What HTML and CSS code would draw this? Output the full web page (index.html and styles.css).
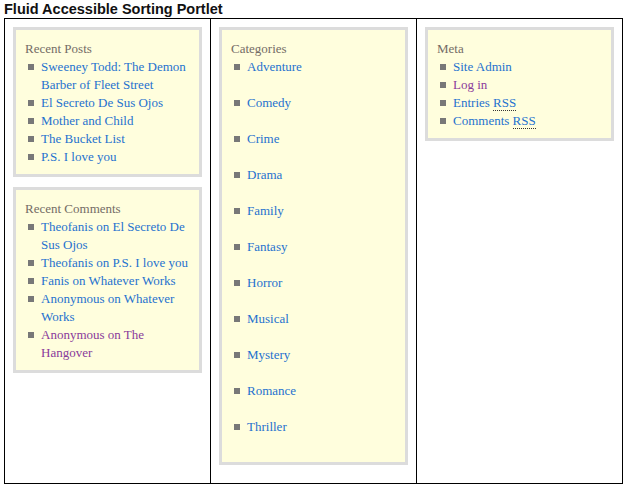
FILE: index.html
```html
<!DOCTYPE html>
<html>
<head>
<meta charset="utf-8">
<link rel="stylesheet" href="styles.css">
</head>
<body>
<h1 class="title">Fluid Accessible Sorting Portlet</h1>
<div class="layout">
  <div class="column">
    <div class="portlet">
      <h2 class="portlet-title">Recent Posts</h2>
      <ul class="list">
        <li><span><a href="#">Sweeney Todd: The Demon Barber of Fleet Street</a></span></li>
        <li><span><a href="#">El Secreto De Sus Ojos</a></span></li>
        <li><span><a href="#">Mother and Child</a></span></li>
        <li><span><a href="#">The Bucket List</a></span></li>
        <li><span><a href="#">P.S. I love you</a></span></li>
      </ul>
    </div>
    <div class="portlet">
      <h2 class="portlet-title">Recent Comments</h2>
      <ul class="list">
        <li><span><a href="#">Theofanis on El Secreto De Sus Ojos</a></span></li>
        <li><span><a href="#">Theofanis on P.S. I love you</a></span></li>
        <li><span><a href="#">Fanis on Whatever Works</a></span></li>
        <li><span><a href="#">Anonymous on Whatever Works</a></span></li>
        <li><span><a href="#" class="visited">Anonymous on The Hangover</a></span></li>
      </ul>
    </div>
  </div>
  <div class="column">
    <div class="portlet">
      <h2 class="portlet-title">Categories</h2>
      <ul class="list spaced">
        <li><span><a href="#">Adventure</a></span></li>
        <li><span><a href="#">Comedy</a></span></li>
        <li><span><a href="#">Crime</a></span></li>
        <li><span><a href="#">Drama</a></span></li>
        <li><span><a href="#">Family</a></span></li>
        <li><span><a href="#">Fantasy</a></span></li>
        <li><span><a href="#">Horror</a></span></li>
        <li><span><a href="#">Musical</a></span></li>
        <li><span><a href="#">Mystery</a></span></li>
        <li><span><a href="#">Romance</a></span></li>
        <li><span><a href="#">Thriller</a></span></li>
      </ul>
    </div>
  </div>
  <div class="column">
    <div class="portlet">
      <h2 class="portlet-title">Meta</h2>
      <ul class="list">
        <li><span><a href="#">Site Admin</a></span></li>
        <li><span><a href="#" class="visited">Log in</a></span></li>
        <li><span><a href="#">Entries <abbr title="Really Simple Syndication">RSS</abbr></a></span></li>
        <li><span><a href="#">Comments <abbr title="Really Simple Syndication">RSS</abbr></a></span></li>
      </ul>
    </div>
  </div>
</div>
</body>
</html>
```
FILE: styles.css
```css
html, body {
  margin: 0;
  padding: 0;
  background: #ffffff;
}
body {
  padding: 0 4px;
  font-family: "Liberation Serif", serif;
}
.title {
  margin: 0;
  height: 18px;
  font-family: "Liberation Sans", Arial, sans-serif;
  font-size: 14.5px;
  font-weight: bold;
  line-height: 18px;
  color: #111;
}
.layout {
  display: grid;
  grid-template-columns: 205px 205px 205px;
  column-gap: 1px;
  width: 617px;
  height: 464px;
  border: 1px solid #000;
  background: #000;
}
.column {
  background: #fff;
  padding: 8px;
  display: flex;
  flex-direction: column;
  gap: 10px;
  align-items: stretch;
}
.portlet {
  background: #fffedd;
  border: 3px solid #dcdcdc;
  padding: 10px 9px 8px 9px;
}
.portlet-title {
  margin: 0;
  font-size: 13px;
  font-weight: normal;
  line-height: 18px;
  color: #746c66;
}
.list {
  list-style: none;
  margin: 0;
  padding: 0 0 0 3px;
  font-size: 13px;
  line-height: 18px;
}
.list li {
  display: flex;
  align-items: flex-start;
}
.list li::before {
  content: "";
  flex: none;
  width: 6px;
  height: 6px;
  margin-top: 6px;
  margin-right: 7px;
  background: #787878;
}
.spaced li {
  margin-bottom: 18px;
}
a {
  color: #1f72cf;
  text-decoration: none;
}
a.visited {
  color: #8a3a9b;
}
abbr {
  text-decoration: none;
  border-bottom: 1px dotted #333;
}
```
